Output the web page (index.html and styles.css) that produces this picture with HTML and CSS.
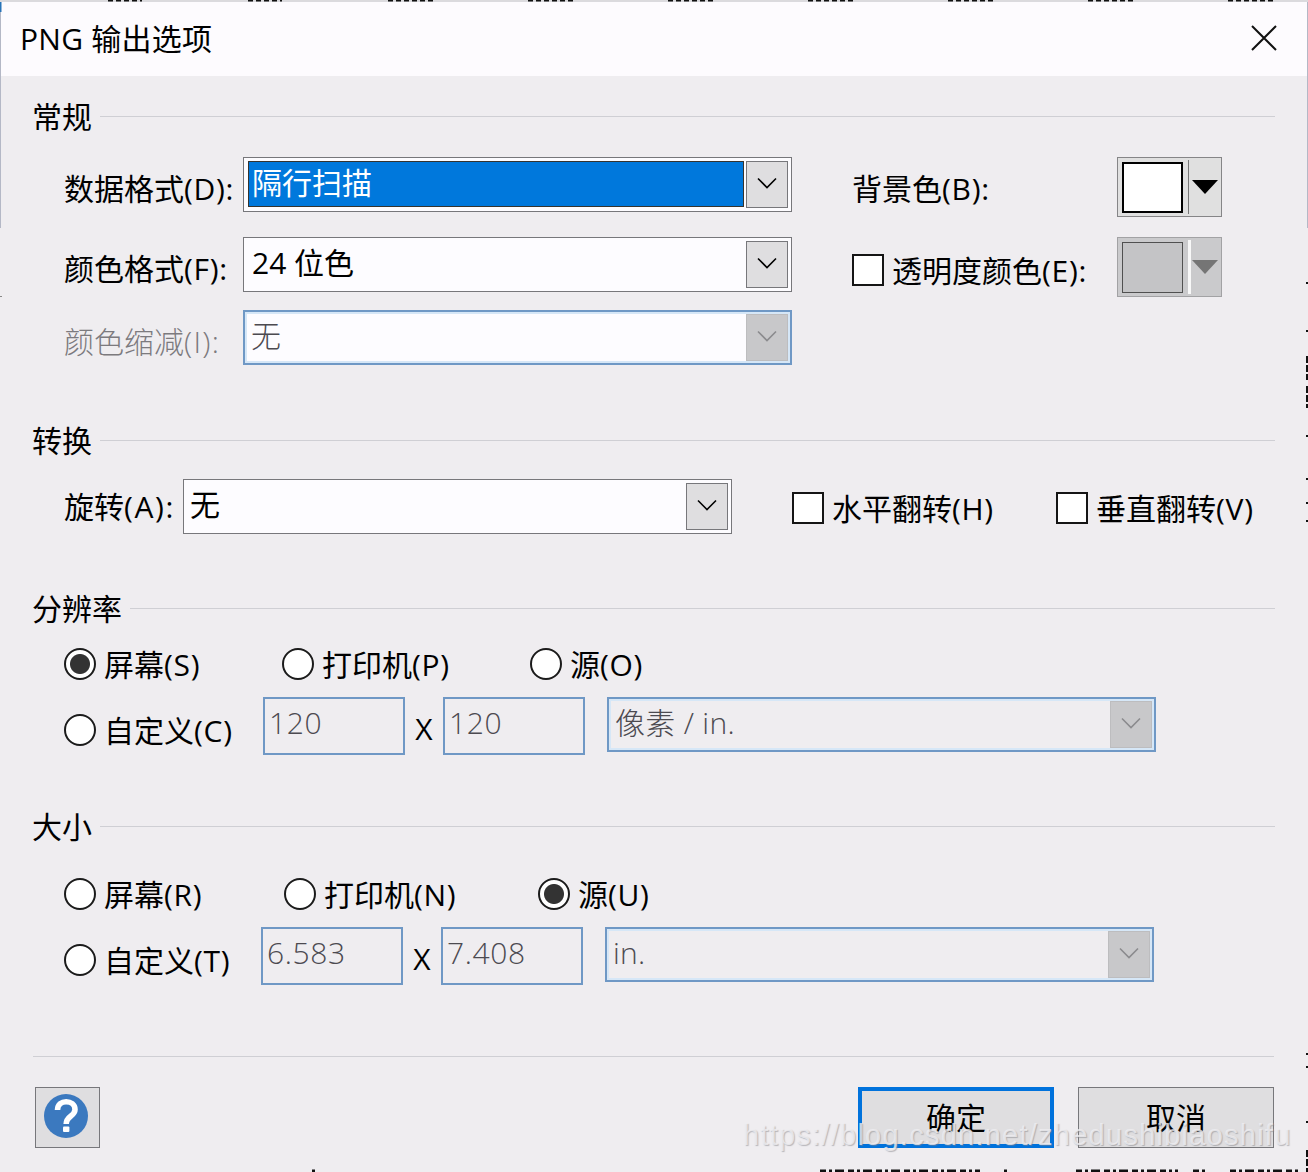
FILE: index.html
```html
<!DOCTYPE html>
<html lang="zh-CN">
<head>
<meta charset="utf-8">
<title>PNG 输出选项</title>
<link rel="stylesheet" href="styles.css">
</head>
<body>
<svg width="0" height="0" class="defs">
  <symbol id="chevron" viewBox="0 0 20 12"><path d="M1 1.5 10 10.5 19 1.5" fill="none" stroke="currentColor" stroke-width="1.6"/></symbol>
</svg>
<main class="dialog">
  <header class="titlebar">
    <h1>PNG 输出选项</h1>
    <svg class="close" viewBox="0 0 26 26"><path d="M1 1 25 25M25 1 1 25" stroke="#111" stroke-width="2" fill="none"/></svg>
  </header>

  <section class="group general">
    <h2><span>常规</span></h2>
    <div class="columns">
      <div class="formats">
        <div class="field"><label>数据格式<b>(D):</b></label><div class="combo focused"><span>隔行扫描</span><i><svg><use href="#chevron"/></svg></i></div></div>
        <div class="field"><label>颜色格式<b>(F):</b></label><div class="combo"><span>24 位色</span><i><svg><use href="#chevron"/></svg></i></div></div>
        <div class="field off"><label>颜色缩减<b>(I):</b></label><div class="combo disabled white"><span>无</span><i><svg><use href="#chevron"/></svg></i></div></div>
      </div>
      <div class="colors">
        <div class="color-row"><label>背景色<b>(B):</b></label><div class="swatch"><em></em><svg viewBox="0 0 26 14"><path d="M0 0H26L13 14Z"/></svg></div></div>
        <div class="color-row"><label class="check"><i></i><span>透明度颜色<b>(E):</b></span></label><div class="swatch off"><em></em><svg viewBox="0 0 26 14"><path d="M0 0H26L13 14Z"/></svg></div></div>
      </div>
    </div>
  </section>

  <section class="group transform">
    <h2><span>转换</span></h2>
    <div class="line">
      <label class="rotate">旋转<b>(A):</b></label><div class="combo"><span>无</span><i><svg><use href="#chevron"/></svg></i></div>
      <label class="check horizontal"><i></i><span>水平翻转<b>(H)</b></span></label>
      <label class="check"><i></i><span>垂直翻转<b>(V)</b></span></label>
    </div>
  </section>

  <section class="group resolution">
    <h2><span>分辨率</span></h2>
    <div class="radios">
      <label class="radio on"><i></i><span>屏幕<b>(S)</b></span></label>
      <label class="radio"><i></i><span>打印机<b>(P)</b></span></label>
      <label class="radio"><i></i><span>源<b>(O)</b></span></label>
    </div>
    <div class="custom">
      <label class="radio"><i></i><span>自定义<b>(C)</b></span></label>
      <div class="box">120</div><span class="times">X</span><div class="box">120</div>
      <div class="combo disabled"><span>像素 / in.</span><i><svg><use href="#chevron"/></svg></i></div>
    </div>
  </section>

  <section class="group size">
    <h2><span>大小</span></h2>
    <div class="radios">
      <label class="radio"><i></i><span>屏幕<b>(R)</b></span></label>
      <label class="radio"><i></i><span>打印机<b>(N)</b></span></label>
      <label class="radio on"><i></i><span>源<b>(U)</b></span></label>
    </div>
    <div class="custom">
      <label class="radio"><i></i><span>自定义<b>(T)</b></span></label>
      <div class="box">6.583</div><span class="times">X</span><div class="box">7.408</div>
      <div class="combo disabled"><span>in.</span><i><svg><use href="#chevron"/></svg></i></div>
    </div>
  </section>

  <footer class="actions">
    <button class="help"><svg viewBox="0 0 44 44"><circle cx="22" cy="22" r="22" fill="#3b79bf"/><path d="M13.500 16C13.500 4.500 31 5.500 31 15.500C31 22.500 22.200 21.500 22.200 30" fill="none" stroke="#fff" stroke-width="5.600"/><rect x="19" y="32.500" width="6.400" height="5.500" rx="1" fill="#fff"/></svg></button>
    <button class="ok">确定</button>
    <button class="cancel">取消</button>
  </footer>
  <div class="watermark">https://blog.csdn.net/zhedushibiaoshifu</div>
  <svg class="edge" viewBox="0 0 1308 1172" fill="none" stroke="#111">
    <path d="M0 1H1308" stroke="#b9b9bd"/>
    <path d="M108 .5h34M248 .5h34M388 .5h46M528 .5h46M668 .5h46M808 .5h46M948 .5h46M1088 .5h46M1228 .5h46" stroke-width="2" stroke-dasharray="5 3"/>
    <path d="M.5 2V228M1307.500 2V228" stroke="#b4b8c6"/><path d="M0 2v10" stroke="#2874b8" stroke-width="3"/>
    <path d="M0 296.500h2" stroke="#888"/>
    <path d="M1307 282v2M1307 330v2M1307 356v24M1307 386v22M1307 435v2M1307 478v2M1307 502v2M1307 520v2M1307 1053v2M1307 1066v2M1307 1121v2M1307 1150v22" stroke-width="2" stroke-dasharray="7 2"/>
    <path d="M312 1171h3M820 1171h160M1004 1171h3M1076 1171h102M1193 1171h12M1230 1171h70" stroke-width="3" stroke-dasharray="6 3 3 3 9 4"/>
  </svg>
</main>
</body>
</html>
```
FILE: styles.css
```css
* { box-sizing: border-box; }
body { margin: 0; }
.defs { position: absolute; }

.dialog {
  position: relative;
  width: 1308px;
  height: 1172px;
  overflow: hidden;
  background: #efedf0;
  color: #000;
  font: 30px/32px "Open Sans", "Noto Sans CJK SC", sans-serif;
}
b { font-weight: 400; letter-spacing: 0.7px; }
label { white-space: nowrap; }

.titlebar {
  display: flex;
  justify-content: space-between;
  align-items: center;
  height: 76px;
  padding: 0 31px 0 20px;
  background: #fdfbfe;
}
h1 { margin: 1px 0 0; font-size: 30px; font-weight: 400; letter-spacing: 0.25px; }
.close { width: 26px; height: 26px; }

.group { padding: 0 33px 0 32px; }
.general { height: 350px; padding-top: 26px; }
.transform { height: 168px; }
.resolution { height: 218px; }
.size { height: 244px; }
h2 {
  display: flex;
  align-items: center;
  gap: 8px;
  height: 30px;
  margin: 0;
  font-size: 30px;
  font-weight: 400;
}
h2::after { content: ""; flex: 1; height: 1px; margin-top: -1px; background: #cfcfd4; }

.columns { display: flex; padding: 25px 0 0 32px; }
.formats { width: 788px; }
.field { display: flex; height: 54px; margin-bottom: 26px; }
.field:nth-child(2) { margin-bottom: 19px; }
.field label { width: 179px; padding-top: 16px; }
.field.off label { color: #7c7a7e; font-weight: 300; }
.off b { font-weight: 300; letter-spacing: 1.3px; }

.combo {
  display: flex;
  flex: none;
  width: 549px;
  height: 55px;
  padding: 3px;
  border: 1px solid #77777b;
  background: #fdfcff;
}
.combo span { flex: 1; padding-left: 5px; line-height: 44px; }
.combo i {
  display: flex;
  align-items: center;
  justify-content: center;
  width: 42px;
  height: 47px;
  border: 1px solid #77777b;
  background: #dfdee0;
}
.combo svg { width: 20px; height: 12px; margin-top: -3px; }
.combo.focused span {
  margin: 1px 3px 2px 2px;
  padding-left: 3px;
  line-height: 41px;
  color: #fff;
  background: #0078dc;
  outline: 1px solid #36342f;
}
.combo.disabled {
  border: 2px solid #6f98c5;
  box-shadow: inset 0 0 0 2px #d6e7f7;
  background: transparent;
  color: #4c4a50;
  font-weight: 300;
  padding: 2px;
}
.combo.disabled span { padding-left: 4px; letter-spacing: 0.3px; }
.combo.disabled.white { background: #fdfcff; }
.disabled i { border-color: #bdbdbf; background: #c8c8ca; color: #8b8b8e; }

.colors { width: 370px; }
.color-row { display: flex; justify-content: space-between; height: 60px; margin-bottom: 20px; }
.color-row > label { padding-top: 16px; }
.color-row > .check { padding-top: 17px; }
.check { display: flex; gap: 8px; }
.check i { width: 32px; height: 32px; border: 2px solid #151515; background: #fff; }
.check span { padding-top: 1px; }
.swatch {
  display: flex;
  align-items: center;
  width: 105px;
  height: 60px;
  padding-left: 4px;
  border: 1px solid #858587;
  background: #e0e0e0;
}
.swatch em { width: 61px; height: 51px; margin-right: 5px; border: 2px solid #000; background: #fff; }
.swatch svg { box-sizing: content-box; width: 26px; height: 14px; padding: 20px 0 20px 3px; border-left: 1px solid #777; }
.swatch.off { border-color: #a2a2a4; background: #cacacc; }
.swatch.off em { border: 1px solid #505050; background: #c4c4c6; }
.swatch.off svg { border-left: 3px solid #f8f8f8; padding-left: 1px; fill: #757575; }

.line { display: flex; padding: 23px 0 0 32px; }
.line .combo span { padding-left: 3px; }
.rotate { width: 119px; padding-top: 12px; }
.rotate b { letter-spacing: 1.6px; }
.line .check { padding-top: 13px; }
.horizontal { width: 264px; margin-left: 60px; }
.line .check:last-child { width: 200px; }

.radios { display: flex; height: 73px; padding: 24px 0 0 32px; }
.size .radios { height: 85px; padding-top: 36px; }
.radio { display: flex; gap: 8px; }
.radio i {
  width: 32px;
  height: 32px;
  border: 2px solid #1b1b1b;
  border-radius: 50%;
  background: #fff;
}
.radio.on i { background: radial-gradient(circle, #333 9.5px, #fff 10.5px); }
.radio span { padding-top: 1px; }
.radios .radio:nth-child(1) { width: 218px; }
.radios .radio:nth-child(2) { width: 248px; }
.size .radios .radio:nth-child(1) { width: 220px; }
.size .radios .radio:nth-child(2) { width: 254px; }
.custom { display: flex; padding-left: 32px; }
.custom .radio { width: 199px; padding-top: 17px; }
.size .custom .radio { width: 197px; }
.box {
  width: 142px;
  height: 58px;
  padding-left: 4px;
  border: 2px solid #6f98c5;
  line-height: 48px;
  letter-spacing: 0.6px;
  font-weight: 300;
  color: #4c4a50;
}
.times { width: 38px; padding-top: 16px; text-align: center; }
.custom .combo { margin-left: 22px; }

.actions {
  display: flex;
  margin: 0 34px 0 33px;
  padding-top: 30px;
  border-top: 1px solid #cfcfd4;
}
button {
  width: 196px;
  height: 61px;
  padding: 0;
  border: 1px solid #77777b;
  background: #dfdee0;
  color: #000;
  font: inherit;
}
.help { display: flex; align-items: flex-start; width: 65px; margin-left: 2px; margin-right: auto; padding: 6px 0 0 8px; }
.help svg { width: 44px; height: 44px; }
.ok { border: 4px solid #0072dc; }
.cancel { margin-left: 24px; }

.watermark {
  position: absolute;
  left: 743px;
  top: 1119px;
  font: 29px/32px "Liberation Sans", sans-serif;
  white-space: nowrap;
  letter-spacing: 1.25px;
  color: rgba(240, 239, 242, .8);
  text-shadow: 1px 1px 1px rgba(130, 130, 135, .5);
}
.edge { position: absolute; inset: 0; width: 1308px; height: 1172px; }
```
